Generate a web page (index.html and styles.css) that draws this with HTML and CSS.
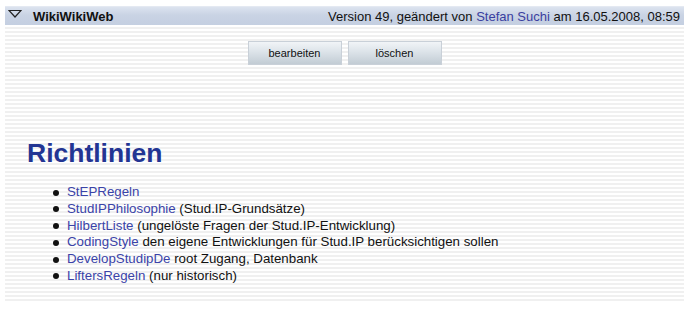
FILE: index.html
```html
<!DOCTYPE html>
<html lang="de">
<head>
<meta charset="utf-8">
<title>WikiWikiWeb</title>
<link rel="stylesheet" href="styles.css">
</head>
<body>
<div class="page">
  <div class="titlebar">
    <div class="title-left">
      <svg class="tri" width="14" height="9" viewBox="0 0 14 9"><path d="M1 1.5 H13 L7 8 Z" fill="none" stroke="#222" stroke-width="1.2" stroke-linejoin="miter"/></svg>
      <span class="title">WikiWikiWeb</span>
    </div>
    <div class="meta">Version 49, geändert von <a href="#">Stefan Suchi</a> am 16.05.2008, 08:59</div>
  </div>
  <div class="content">
    <div class="actions">
      <button class="btn">bearbeiten</button>
      <button class="btn">löschen</button>
    </div>
    <h1 class="heading">Richtlinien</h1>
    <ul class="links">
      <li><a href="#">StEPRegeln</a></li>
      <li><a href="#">StudIPPhilosophie</a> (Stud.IP-Grundsätze)</li>
      <li><a href="#">HilbertListe</a> (ungelöste Fragen der Stud.IP-Entwicklung)</li>
      <li><a href="#">CodingStyle</a> den eigene Entwicklungen für Stud.IP berücksichtigen sollen</li>
      <li><a href="#">DevelopStudipDe</a> root Zugang, Datenbank</li>
      <li><a href="#">LiftersRegeln</a> (nur historisch)</li>
    </ul>
  </div>
</div>
</body>
</html>
```

FILE: styles.css
```css
html, body {
  margin: 0;
  padding: 0;
  background: #fff;
}
body {
  font-family: "Liberation Sans", Arial, sans-serif;
  color: #111;
}
.page {
  padding: 6px 6px 0 5px;
}
.titlebar {
  display: flex;
  justify-content: space-between;
  align-items: center;
  height: 19px;
  background: linear-gradient(to bottom, #dce3ef 0%, #c9d3e4 45%, #c4cfe1 100%);
  border-top: 1px solid #e4e9f2;
  box-sizing: border-box;
  font-size: 13px;
}
.title-left {
  display: flex;
  align-items: center;
}
.tri {
  margin-left: 3px;
  margin-right: 11px;
  margin-top: -5px;
}
.title {
  font-weight: bold;
  color: #111;
}
.meta {
  padding-right: 4px;
  color: #111;
}
.meta a {
  color: #3a3fa0;
  text-decoration: none;
}
.content {
  height: 278px;
  background: repeating-linear-gradient(to bottom, #ffffff 0px, #ffffff 2px, #f0f0f0 2px, #f0f0f0 4px);
  padding-top: 16px;
  box-sizing: border-box;
}
.actions {
  display: flex;
  justify-content: center;
  gap: 6px;
}
.btn {
  width: 94px;
  height: 24px;
  font-family: "Liberation Sans", Arial, sans-serif;
  font-size: 11px;
  color: #111;
  border: 1px solid #c9d0d8;
  border-radius: 0;
  background: linear-gradient(to bottom, #f1f4f7 0%, #dce3e9 45%, #c2ccd4 100%);
  padding: 0;
}
.heading {
  margin: 73px 0 0 22px;
  font-size: 26.5px;
  line-height: 30px;
  font-weight: bold;
  color: #233593;
}
.links {
  margin: 16px 0 0 0;
  padding-left: 62px;
  font-size: 13.3px;
  line-height: 16.8px;
  list-style: none;
}
.links li {
  position: relative;
}
.links li::before {
  content: "";
  position: absolute;
  left: -14px;
  top: 5.5px;
  width: 6px;
  height: 6px;
  border-radius: 50%;
  background: #111;
}
.links a {
  color: #3a43a8;
  text-decoration: none;
}
```
